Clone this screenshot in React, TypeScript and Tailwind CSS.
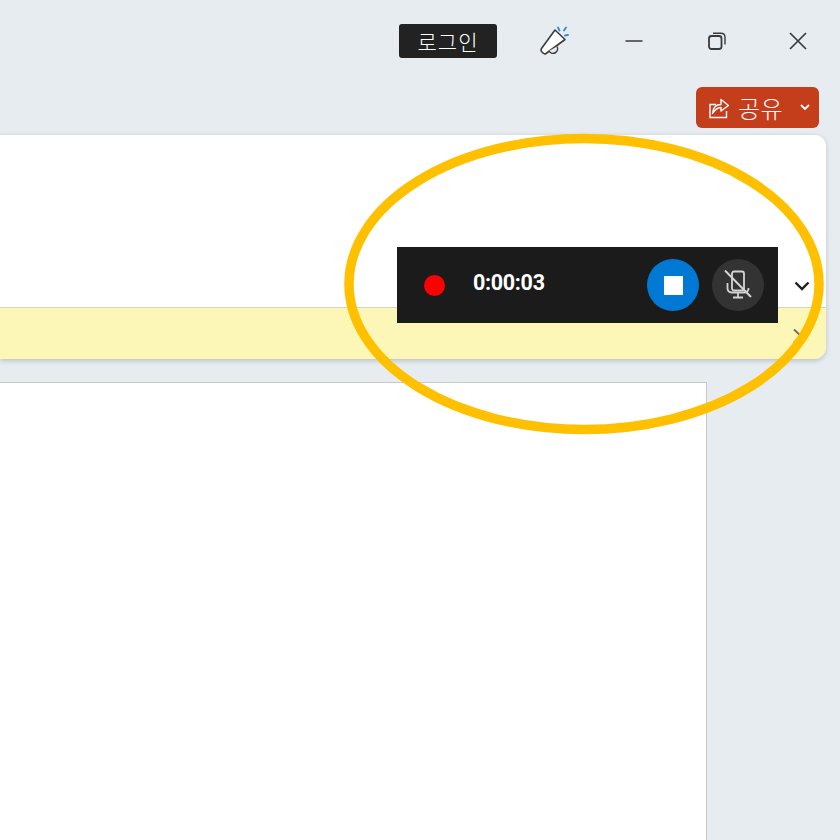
const korean = "font-['Noto_Sans_CJK_KR','Noto_Sans',sans-serif]";

function Megaphone() {
  return (
    <svg width="30" height="30" viewBox="0 0 30 30" fill="none">
      <path d="M16 4 L26 13.5 L7 27.5 Q5.5 28.5 4 27 L2.5 25.5 Q1.5 24 2.5 22.5 Z" fill="#fff" stroke="#3c3c3c" strokeWidth="1.6" strokeLinejoin="round" />
      <path d="M10 25 A4.5 4.5 0 0 0 18 20.5" fill="#e6ebf0" stroke="#3c3c3c" strokeWidth="1.5" />
      <path d="M19 1.5 L20.5 4.5 M27 1.5 L25 4.5 M29 9 L26 9.5" stroke="#2b8fd8" strokeWidth="1.8" strokeLinecap="round" />
    </svg>
  );
}

function WindowButtons() {
  return (
    <div className="flex items-center gap-[63px] ml-[56px]">
      <svg width="18" height="18" viewBox="0 0 18 18" fill="none">
        <path d="M0.5 9 H17.5" stroke="#3a3a3a" strokeWidth="1.5" />
      </svg>
      <svg className="ml-[2px]" width="18" height="18" viewBox="0 0 18 18" fill="none">
        <rect x="1" y="4" width="12.5" height="13" rx="2.5" stroke="#3a3a3a" strokeWidth="1.8" />
        <path d="M5 1.2 H13 A4 4 0 0 1 17 5 V12.5" stroke="#3a3a3a" strokeWidth="1.4" />
      </svg>
      <svg width="18" height="18" viewBox="0 0 18 18" fill="none">
        <path d="M1 1 L17 17 M17 1 L1 17" stroke="#3a3a3a" strokeWidth="1.7" />
      </svg>
    </div>
  );
}

function ShareButton() {
  return (
    <div className="flex items-center w-[123px] h-[41px] bg-[#c43e1c] rounded-[6px] text-white pl-[13px]">
      <svg width="20" height="22" viewBox="0 0 20 22" fill="none">
        <path d="M7 7.5 H1 V20.5 H17.5 V14" stroke="#fff" strokeWidth="1.4" />
        <path d="M3.5 16.5 C4 10.5 7.5 7.5 12 7.5 V2.5 L19.5 8.5 L12 14 V10.5 C8.5 10.5 6 12.5 3.5 16.5 Z" stroke="#fff" strokeWidth="1.4" strokeLinejoin="round" />
      </svg>
      <span className={`${korean} font-light text-[24px] leading-none ml-[9px] tracking-[0.5px]`}>공유</span>
      <svg className="ml-[17px]" width="10" height="7" viewBox="0 0 10 7" fill="none">
        <path d="M1 1 L5 5 L9 1" stroke="#fff" strokeWidth="1.8" />
      </svg>
    </div>
  );
}

function MicOff() {
  return (
    <svg width="28" height="30" viewBox="0 0 28 30" fill="none" stroke="#d4d4d4" strokeWidth="1.8">
      <rect x="8" y="1.5" width="12" height="19" rx="2" />
      <path d="M3.5 13 V18 A4 4 0 0 0 7.5 22.5 H20.5 A4 4 0 0 0 24.5 18" />
      <path d="M14 22.5 V27 M9 27.5 H19" />
      <path d="M1 0.5 L27 27" strokeWidth="2" />
    </svg>
  );
}

function RecordingBar() {
  return (
    <div className="absolute left-[397px] top-[247px] w-[381px] h-[76px] bg-[#1b1b1b] flex items-center pl-[27px] pr-[14px]">
      <div className="w-[21px] h-[21px] rounded-full bg-[#ff0000] mt-[1px]" />
      <span className="ml-[28px] mb-[5px] font-['Roboto',sans-serif] font-bold text-[21.5px] tracking-[-0.3px] leading-none text-white">0:00:03</span>
      <div className="ml-auto w-[52px] h-[52px] rounded-full bg-[#0078d4] flex items-center justify-center">
        <div className="w-[19px] h-[19px] bg-white" />
      </div>
      <div className="ml-[13px] w-[52px] h-[52px] rounded-full bg-[#333333] flex items-center justify-center">
        <MicOff />
      </div>
    </div>
  );
}

export default function App() {
  return (
    <div className="relative w-[840px] h-[840px] overflow-hidden bg-[#e7ecf1] flex flex-col">
      <div className="flex items-center justify-end h-[82px] pr-[33px] shrink-0">
        <div className={`${korean} font-light w-[98px] h-[34px] bg-[#222222] rounded-[3px] text-white text-[21px] leading-none tracking-[1px] flex items-center justify-center mr-[42px]`}>
          로그인
        </div>
        <Megaphone />
        <WindowButtons />
      </div>

      <div className="flex justify-end pr-[21px] mt-[5px] shrink-0">
        <ShareButton />
      </div>

      {/* ribbon */}
      <div className="mt-[6px] mr-[14px] h-[225px] shrink-0 rounded-r-[12px] overflow-hidden border-t border-[#dcdfe3] shadow-[0_2px_5px_rgba(0,0,0,0.18)] flex flex-col">
        <div className="flex-1 bg-white flex items-center justify-end pr-[16px]">
          <svg className="mt-[130px]" width="16" height="10" viewBox="0 0 16 10" fill="none">
            <path d="M1.5 1.5 L8 8 L14.5 1.5" stroke="#1f1f1f" strokeWidth="2.4" />
          </svg>
        </div>
        <div className="h-[52px] bg-[#fdf7b7] border-t border-[#d6d4c4] flex items-center justify-end pr-[22px] pt-[4px]">
          <svg width="12" height="16" viewBox="0 0 12 16" fill="none">
            <path d="M2 1.5 L9 8 L2 14.5" stroke="#6b6b6b" strokeWidth="1.8" />
          </svg>
        </div>
      </div>

      {/* document page */}
      <div className="mt-[23px] w-[707px] flex-1 bg-white border-t border-r border-[#c8c9cc]" />

      <RecordingBar />

      {/* hand-drawn highlight */}
      <svg className="absolute inset-0 pointer-events-none" width="840" height="840" viewBox="0 0 840 840" fill="none">
        <ellipse cx="584" cy="284" rx="235" ry="145.5" stroke="#ffc000" strokeWidth="9.5" />
      </svg>
    </div>
  );
}
